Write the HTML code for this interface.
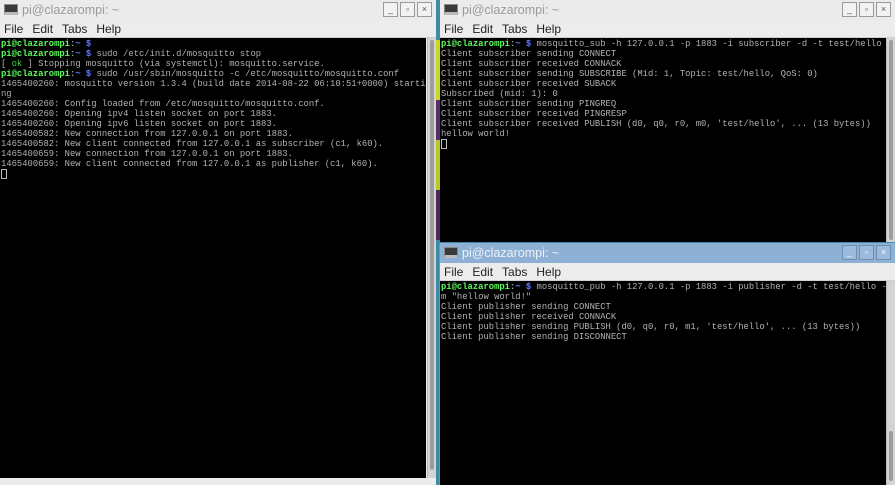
<!DOCTYPE html>
<html><head><meta charset="utf-8"><style>
*{margin:0;padding:0;box-sizing:border-box}
body{width:895px;height:485px;overflow:hidden;background:#3b8aa6;position:relative;font-family:"Liberation Sans",sans-serif}
.win{position:absolute;background:#ececec;overflow:hidden}
.title{position:absolute;left:0;right:0;top:0;height:20px;background:#ebebeb;color:#9a9a9a;font-size:12.5px;line-height:20px;padding-left:22px}
.title.act{background:#8eb0d4;color:#eef2f7}
.ico{position:absolute;left:4px;top:4px;width:14px;height:11px;background:#3a3a3a;border:1px solid #888;border-bottom:3px solid #bbb}
.btns{position:absolute;right:4px;top:2px;display:flex;gap:2px}
.btns span{width:15px;height:15px;border:1px solid #9a9a9a;background:#f2f2f2;font-size:9px;line-height:13px;text-align:center;color:#555}
.act .btns span{border-color:#6d8fb3;background:#9cbbdc;color:#fff}
.menu{position:absolute;left:0;right:0;top:20px;height:18px;font-size:12px;line-height:18px;color:#222;padding-left:4px;border-bottom:1px solid #cfcfcf}
.menu b{font-weight:normal;margin-right:9px}
.term{position:absolute;left:0;top:38px;bottom:7px;background:#000;font-family:"Liberation Mono",monospace;font-size:8.85px;line-height:10px;color:#b2b2b2;white-space:pre;padding:1px 0 0 1px;overflow:hidden}
.g{color:#5cfc5c;font-weight:bold}.bl{color:#5f7cff;font-weight:bold}.ok{color:#3cd33c}
.cur{display:inline-block;width:6px;height:10px;border:1px solid #bbb;vertical-align:top}
.sb{position:absolute;top:38px;bottom:7px;width:9px;background:#d4d4d4;border-left:1px solid #bbb}
.sb i{position:absolute;left:2px;width:4px;background:#9d9d9d;border-radius:2px}
</style></head><body>
<div style="position:absolute;left:436px;top:40px;width:4px;height:60px;background:#c8d82a"></div>
<div style="position:absolute;left:436px;top:100px;width:4px;height:40px;background:#5a2d6a"></div>
<div style="position:absolute;left:436px;top:140px;width:4px;height:50px;background:#b8c82a"></div>
<div style="position:absolute;left:436px;top:190px;width:4px;height:50px;background:#4a2a5a"></div>

<div class="win" style="left:0;top:0;width:436px;height:485px">
<div class="title"><div class="ico"></div>pi@clazarompi: ~<div class="btns"><span>_</span><span>▫</span><span>×</span></div></div>
<div class="menu"><b>File</b><b>Edit</b><b>Tabs</b><b>Help</b></div>
<div class="term" style="right:10px"><span class="g">pi@clazarompi</span>:<span class="bl">~ $</span>
<span class="g">pi@clazarompi</span>:<span class="bl">~ $</span> sudo /etc/init.d/mosquitto stop
[ <span class="ok">ok</span> ] Stopping mosquitto (via systemctl): mosquitto.service.
<span class="g">pi@clazarompi</span>:<span class="bl">~ $</span> sudo /usr/sbin/mosquitto -c /etc/mosquitto/mosquitto.conf
1465400260: mosquitto version 1.3.4 (build date 2014-08-22 06:10:51+0000) starti
ng
1465400260: Config loaded from /etc/mosquitto/mosquitto.conf.
1465400260: Opening ipv4 listen socket on port 1883.
1465400260: Opening ipv6 listen socket on port 1883.
1465400582: New connection from 127.0.0.1 on port 1883.
1465400582: New client connected from 127.0.0.1 as subscriber (c1, k60).
1465400659: New connection from 127.0.0.1 on port 1883.
1465400659: New client connected from 127.0.0.1 as publisher (c1, k60).
<span class="cur"></span></div>
<div class="sb" style="right:0"><i style="top:2px;bottom:8px"></i></div>
</div>

<div class="win" style="left:440px;top:0;width:455px;height:242px">
<div class="title"><div class="ico"></div>pi@clazarompi: ~<div class="btns"><span>_</span><span>▫</span><span>×</span></div></div>
<div class="menu"><b>File</b><b>Edit</b><b>Tabs</b><b>Help</b></div>
<div class="term" style="right:9px;bottom:0"><span class="g">pi@clazarompi</span>:<span class="bl">~ $</span> mosquitto_sub -h 127.0.0.1 -p 1883 -i subscriber -d -t test/hello
Client subscriber sending CONNECT
Client subscriber received CONNACK
Client subscriber sending SUBSCRIBE (Mid: 1, Topic: test/hello, QoS: 0)
Client subscriber received SUBACK
Subscribed (mid: 1): 0
Client subscriber sending PINGREQ
Client subscriber received PINGRESP
Client subscriber received PUBLISH (d0, q0, r0, m0, 'test/hello', ... (13 bytes))
hellow world!
<span class="cur"></span></div>
<div class="sb" style="right:0;bottom:0"><i style="top:2px;bottom:2px"></i></div>
</div>

<div class="win" style="left:439px;top:243px;width:456px;height:242px;border-left:1px solid #6a9ab0">
<div class="title act"><div class="ico"></div>pi@clazarompi: ~<div class="btns"><span>_</span><span>▫</span><span>×</span></div></div>
<div class="menu"><b>File</b><b>Edit</b><b>Tabs</b><b>Help</b></div>
<div class="term" style="right:9px;bottom:0"><span class="g">pi@clazarompi</span>:<span class="bl">~ $</span> mosquitto_pub -h 127.0.0.1 -p 1883 -i publisher -d -t test/hello -
m "hellow world!"
Client publisher sending CONNECT
Client publisher received CONNACK
Client publisher sending PUBLISH (d0, q0, r0, m1, 'test/hello', ... (13 bytes))
Client publisher sending DISCONNECT</div>
<div class="sb" style="right:0;bottom:0"><i style="top:150px;bottom:4px"></i></div>
</div>
</body></html>
